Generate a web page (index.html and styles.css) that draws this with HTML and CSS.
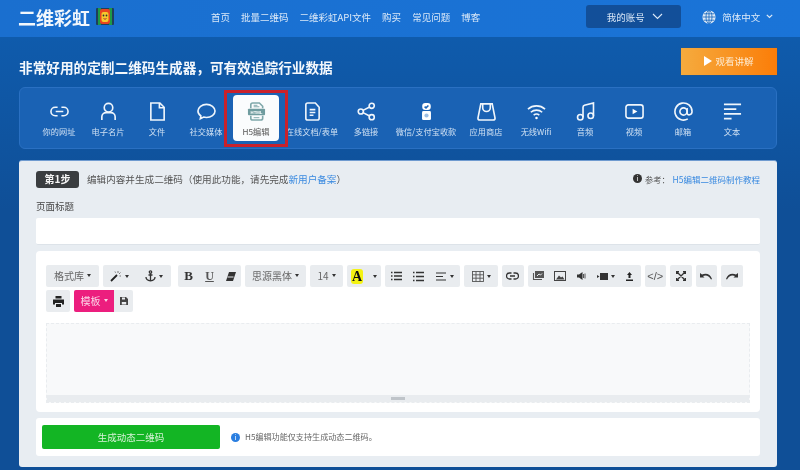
FILE: index.html
```html
<!DOCTYPE html>
<html lang="zh-CN">
<head>
    <meta charset="UTF-8">
    <meta name="viewport" content="width=device-width, initial-scale=1.0">
    <title>二维彩虹</title>
    <link rel="stylesheet" href="styles.css">
</head>
<body>
    <header class="topbar">
        <div class="logo">二维彩虹</div>
        <svg class="logo-mark" width="18" height="19" viewBox="0 0 18 19">
            <rect x="0" y="1" width="18" height="17" rx="1" fill="#1f3f5c"/>
            <rect x="2" y="1" width="3" height="17" fill="#1d9a46"/>
            <rect x="13" y="1" width="3" height="17" fill="#1d9a46"/>
            <rect x="4" y="2" width="10" height="15" rx="2" fill="#e8451f"/>
            <rect x="5.500" y="5" width="7" height="10" rx="2" fill="#f5c92c"/>
            <circle cx="7.500" cy="8.500" r=".9" fill="#333"/>
            <circle cx="10.500" cy="8.500" r=".9" fill="#333"/>
            <path d="M7.500 11.500q1.500 1.500 3 0" stroke="#a33" fill="none"/>
        </svg>
        <nav class="nav">
            <a>首页</a>
            <a>批量二维码</a>
            <a>二维彩虹API文件</a>
            <a>购买</a>
            <a>常见问题</a>
            <a>博客</a>
        </nav>
        <div class="account">我的账号
            <svg width="11" height="7" viewBox="0 0 11 7"><path d="M1 1l4.500 4.500L10 1" fill="none" stroke="#dbe9f8" stroke-width="1.100"/></svg>
        </div>
        <div class="lang">
            <svg width="14" height="14" viewBox="0 0 14 14" fill="none" stroke="#0f62bb" stroke-width=".8"><circle cx="7" cy="7" r="6.600" fill="#dfeaf6" stroke="none"/><ellipse cx="7" cy="7" rx="3" ry="6.400"/><path d="M7 .6v12.800M.6 7h12.800M1.600 3.800h10.800M1.600 10.200h10.800"/></svg>
            <span>简体中文</span>
            <svg width="7" height="5" viewBox="0 0 7 5"><path d="M.8.8l2.700 2.700L6.200.8" fill="none" stroke="#dfeaf6" stroke-width="1.200"/></svg>
        </div>
    </header>

    <main class="main">
        <div class="hero">
            <h1>非常好用的定制二维码生成器，可有效追踪行业数据</h1>
            <a class="watch-btn"><i class="play"></i>观看讲解</a>
        </div>

        <div class="tabs">
            <div class="tab">
                <svg viewBox="0 0 20 20"><path d="M8 5.500H5.500a4.500 4.500 0 0 0 0 9H8M12 5.500h2.500a4.500 4.500 0 0 1 0 9H12M6 10h8"/></svg>
                <span>你的网址</span>
            </div>
            <div class="tab">
                <svg viewBox="0 0 20 20"><circle cx="10" cy="6" r="4.500"/><path d="M3 19v-3.500a4.500 4.500 0 0 1 4.500-4.300h5a4.500 4.500 0 0 1 4.500 4.300V19"/></svg>
                <span>电子名片</span>
            </div>
            <div class="tab">
                <svg viewBox="0 0 20 20"><path d="M3 1h9.500L17 5.500V19H3zM12 1v5h5"/></svg>
                <span>文件</span>
            </div>
            <div class="tab">
                <svg viewBox="0 0 20 20"><path d="M10 2.500c-4.800 0-9 3-9 7 0 2.200 1.300 4 3.100 5.200l-.6 3 3.500-1.800c.9.300 1.900.4 3 .4 4.800 0 9-3 9-6.800s-4.200-7-9-7z"/></svg>
                <span>社交媒体</span>
            </div>
            <div class="tab tab-active">
                <svg viewBox="0 0 20 20" class="html-icon"><path d="M4 6.500V3q0-2 2-2h7l3.500 3.500v2"/><path d="M7 3.500h4M7 5h6" stroke-width="1"/><rect x="1" y="7" width="18" height="7" rx="1" fill="#6f9c9f" stroke="none"/><path d="M4 14.500V17q0 2 2 2h8.500q2 0 2-2v-2.500"/><path d="M7 16.500h6" stroke-width="1"/><text x="10" y="12.300" text-anchor="middle" class="html-text">HTML</text></svg>
                <span>H5编辑</span>
            </div>
            <div class="tab tab-doc">
                <svg viewBox="0 0 20 20"><path d="M3 3q0-2 2-2h8l4 4.500V17q0 2-2 2H5q-2 0-2-2zM7 8h6M7 11h6M7 14h4"/></svg>
                <span>在线文档/表单</span>
            </div>
            <div class="tab">
                <svg viewBox="0 0 20 20"><circle cx="15.500" cy="4" r="2.700"/><circle cx="4" cy="10" r="2.700"/><circle cx="15.500" cy="16" r="2.700"/><path d="M6.300 8.800l7-3.600M6.300 11.200l7 3.600"/></svg>
                <span>多链接</span>
            </div>
            <div class="tab tab-pay">
                <svg viewBox="0 0 20 20"><rect x="5.500" y="1" width="9" height="7.500" rx="3.200" fill="#fff" stroke="none"/><path d="M8 4.800l1.500 1.400 2.500-2.500" stroke="#1b65b9"/><rect x="5.300" y="9.500" width="9.400" height="9.500" rx="1.500" fill="#fff" stroke="none"/><circle cx="10" cy="14.200" r="2.200" fill="#9dbfe4" stroke="none"/></svg>
                <span>微信/支付宝收款</span>
            </div>
            <div class="tab">
                <svg viewBox="0 0 20 20"><path d="M4 2h12l3 15q0 2-2 2H3q-2 0-2-2z"/><path d="M6 2v4a4 4 0 0 0 8 0V2"/></svg>
                <span>应用商店</span>
            </div>
            <div class="tab tab-wifi">
                <svg viewBox="0 0 20 20"><path d="M1 7.500c5-4.500 13-4.500 18 0M4 10.800c3.500-3 8.500-3 12 0M7 13.800c1.700-1.300 4.300-1.300 6 0"/><circle cx="10" cy="16.800" r="1.300" fill="#fff" stroke="none"/></svg>
                <span>无线Wifi</span>
            </div>
            <div class="tab">
                <svg viewBox="0 0 20 20"><circle cx="4.500" cy="16" r="2.900"/><circle cx="15.500" cy="14.500" r="2.900"/><path d="M7.400 16V5.500q0-1.500 1.500-2L18.400 1v13.500"/></svg>
                <span>音频</span>
            </div>
            <div class="tab">
                <svg viewBox="0 0 20 20"><rect x="1" y="3" width="18" height="14" rx="2.500"/><path d="M8 7v6l5-3z" fill="#fff" stroke="none"/></svg>
                <span>视频</span>
            </div>
            <div class="tab">
                <svg viewBox="0 0 20 20"><circle cx="10" cy="10" r="3.800"/><path d="M13.800 6.200v5.500c0 2.800 5.200 2.400 5.200-1.700A9 9 0 1 0 14.500 17.800"/></svg>
                <span>邮箱</span>
            </div>
            <div class="tab">
                <svg viewBox="0 0 20 20"><path d="M1 2.500h18M1 7.500h13M1 12.500h18M1 17.500h8"/></svg>
                <span>文本</span>
            </div>
        </div>

        <section class="panel">
            <div class="step-row">
                <span class="step-badge">第1步</span>
                <span class="step-text">编辑内容并生成二维码（使用此功能，请先完成<a class="link">新用户备案</a>）</span>
                <span class="ref">
                    <i class="ref-dot">i</i>参考：<a class="link ref-link">H5编辑二维码制作教程</a>
                </span>
            </div>

            <label class="field-label">页面标题</label>
            <div class="title-input"></div>

            <div class="editor">
                <div class="toolbar">
                    <div class="group"><span class="btn btn-text">格式库<i class="caret"></i></span></div>
                    <div class="group">
                        <span class="btn w-wand"><svg width="12" height="12" viewBox="0 0 12 12"><path d="M1 11l6-6" stroke="#222" stroke-width="1.800"/><path d="M8 1v2M10.500 2.500L9 4M11 6H9.500M5 1.500l.5 1.200" stroke="#777"/></svg><i class="caret"></i></span>
                        <span class="btn w-anchor"><svg width="11" height="12" viewBox="0 0 11 12" fill="none" stroke="#333" stroke-width="1.300"><circle cx="5.500" cy="2" r="1.200"/><path d="M5.500 3.200V11M3.500 5h4M1 7c0 2.500 2 3.500 4.500 3.800C8 10.500 10 9.500 10 7"/></svg><i class="caret"></i></span>
                    </div>
                    <div class="group group-fmt">
                        <span class="btn w-icon font-b">B</span>
                        <span class="btn w-icon font-u">U</span>
                        <span class="btn w-icon"><svg width="10" height="9" viewBox="0 0 10 9"><path d="M3 0h7L7 9H0z" fill="#333"/><path d="M1.500 5h6" stroke="#e9ecef"/></svg></span>
                    </div>
                    <div class="group"><span class="btn btn-text w-font">思源黑体<i class="caret"></i></span></div>
                    <div class="group"><span class="btn btn-text w-size">14<i class="caret"></i></span></div>
                    <div class="group">
                        <span class="btn w-color"><span class="hl">A</span><i class="caret"></i></span>
                    </div>
                    <div class="group">
                        <span class="btn w-list"><svg width="11" height="10" viewBox="0 0 11 10" stroke="#333" stroke-width="1.400"><path d="M0 1.500h1.500M3 1.500h8M0 5h1.500M3 5h8M0 8.500h1.500M3 8.500h8"/></svg></span>
                        <span class="btn w-list"><svg width="11" height="11" viewBox="0 0 11 11" stroke="#333" stroke-width="1.400"><path d="M0 1.500h1.500M3 1.500h8M0 5.500h1.500M3 5.500h8M0 9.500h1.500M3 9.500h8"/></svg></span>
                        <span class="btn w-align"><svg width="10" height="9" viewBox="0 0 10 9" stroke="#333" stroke-width="1.100"><path d="M0 1h10M0 4.500h7M0 8h10"/></svg><i class="caret"></i></span>
                    </div>
                    <div class="group">
                        <span class="btn w-table"><svg width="12" height="11" viewBox="0 0 12 11" fill="none" stroke="#555" stroke-width=".9"><rect x=".5" y=".5" width="11" height="10"/><path d="M4 .5v10M8 .5v10M.5 3.800h11M.5 7.200h11"/></svg><i class="caret"></i></span>
                    </div>
                    <div class="group">
                        <span class="btn w-single"><svg width="13" height="8" viewBox="0 0 13 8" fill="none" stroke="#333" stroke-width="1.300"><path d="M5.500 1H3.500a3 3 0 0 0 0 6H5.500M7.500 1h2a3 3 0 0 1 0 6h-2M4 4h5"/></svg></span>
                    </div>
                    <div class="group">
                        <span class="btn w-media"><svg width="12" height="10" viewBox="0 0 12 10" fill="#555"><path d="M3 0h9v7H3z"/><path d="M1.500 2v6.500H10" fill="none" stroke="#555" stroke-width="1.100"/><path d="M5 5l2-2 1.500 1L10 2.500" stroke="#e9ecef" fill="none"/></svg></span>
                        <span class="btn w-media"><svg width="12" height="10" viewBox="0 0 12 10"><rect x=".5" y=".5" width="11" height="9" fill="none" stroke="#444"/><path d="M2 8.500l3-4 2 2 1.500-1 2 3z" fill="#444"/></svg></span>
                        <span class="btn w-media"><svg width="9" height="8" viewBox="0 0 9 8" fill="#333"><path d="M0 2.500h2L5.500 0v8L2 5.500H0z"/><path d="M6.500 2v4M8 1.500v5" stroke="#333" stroke-width=".8"/></svg></span>
                        <span class="btn w-video"><svg width="11" height="7" viewBox="0 0 11 7" fill="#333"><path d="M3 0h8v7H3zM0 2l2.500 1.500L0 5z"/></svg><i class="caret"></i></span>
                        <span class="btn w-media"><svg width="7" height="9" viewBox="0 0 7 9" fill="#222"><path d="M3.500 0l2.500 3H4.500v3h-2V3H1zM0 7.500h7V9H0z"/></svg></span>
                    </div>
                    <div class="group"><span class="btn w-single code-btn">&lt;/&gt;</span></div>
                    <div class="group">
                        <span class="btn w-single"><svg width="10" height="10" viewBox="0 0 10 10" fill="none" stroke="#333" stroke-width="1.300"><path d="M1 1l8 8M9 1l-8 8M.5 3V.5H3M7 .5h2.500V3M9.500 7v2.500H7M3 9.500H.5V7"/></svg></span>
                    </div>
                    <div class="group">
                        <span class="btn w-single"><svg width="12" height="7" viewBox="0 0 12 7" fill="#333"><path d="M0 0v4.500h4.500L3 3c2.500-1.200 6-.8 8 3.500l1-.5C10.500 1 6-.5 2 1.500z"/></svg></span>
                    </div>
                    <div class="group">
                        <span class="btn w-single"><svg width="12" height="7" viewBox="0 0 12 7" fill="#333"><path d="M12 0v4.500H7.500L9 3C6.500 1.800 3 2.200 1 6.500L0 6C1.500 1 6-.5 10 1.500z"/></svg></span>
                    </div>
                    <div class="group">
                        <span class="btn w-print"><svg width="11" height="11" viewBox="0 0 11 11" fill="#222"><path d="M2.500 0h6v2.500h-6zM0 3.500h11v5H9V7H2v1.500H0zM3 8h5v3H3z"/></svg></span>
                    </div>
                    <div class="group group-join">
                        <span class="btn btn-pink">模板<i class="caret"></i></span>
                        <span class="btn w-save"><svg width="8" height="8" viewBox="0 0 8 8"><path d="M0 0h6l2 2v6H0z" fill="#444"/><path d="M2 .5h3v2H2zM1.800 5h4.400v2.500H1.800z" fill="#e9ecef"/></svg></span>
                    </div>
                </div>
                <div class="edit-area">
                    <div class="resize-bar"><i></i></div>
                </div>
            </div>

            <div class="submit-card">
                <a class="submit-btn">生成动态二维码</a>
                <i class="note-dot">i</i>
                <span class="note">H5编辑功能仅支持生成动态二维码。</span>
            </div>
        </section>
    </main>
</body>
</html>
```

FILE: styles.css
```css
* {
    box-sizing: border-box;
}
html, body {
    margin: 0;
    padding: 0;
    height: 470px;
    overflow: hidden;
}
body {
    font-family: "Noto Sans CJK SC", "Liberation Sans", sans-serif;
    background-color: #0f4f97;
    color: #333;
    filter: blur(.3px); /* the reference is a soft, scaled-up capture */
}

/* top bar */
.topbar {
    height: 37px;
    display: flex;
    align-items: center;
    padding: 0 0 4px 18px;
    background: linear-gradient(90deg, #1a6fcf, #1a74d8);
    color: #dbe9f8;
}
.logo {
    font-size: 18px;
    font-weight: 700;
    color: #f2f7fc;
}
.logo-mark {
    margin-left: 6px;
}
.nav {
    display: flex;
    gap: 11px;
    margin-left: 97px;
    font-size: 9.500px;
}
.account {
    width: 95px;
    height: 23px;
    margin-left: 106px;
    padding-left: 2px;
    background-color: #124f99;
    border-radius: 3px;
    display: flex;
    align-items: center;
    justify-content: center;
    gap: 7px;
    font-size: 9.500px;
}
.lang {
    display: flex;
    align-items: center;
    margin-left: 21px;
    gap: 6px;
    font-size: 9.500px;
}

/* main area */
.main {
    height: 433px;
    padding: 11px 23px 0 19px;
    background: linear-gradient(180deg, #0f5bac, #0f4f97 40%);
}
.hero {
    height: 27px;
    display: flex;
    justify-content: space-between;
    align-items: center;
}
.hero h1 {
    margin: 10px 0 0;
    font-size: 13.650px;
    font-weight: 700;
    color: #f4f8fc;
}
.watch-btn {
    width: 96px;
    height: 27px;
    padding-bottom: 2px;
    display: flex;
    align-items: center;
    justify-content: center;
    gap: 3px;
    background: linear-gradient(90deg, #f5ab3e, #fb7d08);
    color: #fdebd2;
    font-size: 9.500px;
    box-shadow: 0 0 1px #555;
}
.play {
    width: 0;
    height: 0;
    border-left: 8px solid #fff;
    border-top: 5px solid transparent;
    border-bottom: 5px solid transparent;
}

/* type tabs */
.tabs {
    height: 62px;
    margin-top: 12px;
    padding: 7px 0 0 16px;
    display: flex;
    gap: 3px;
    background-color: #1a62b4;
    border: 1px solid #2a70c2;
    border-radius: 6px;
}
.tab {
    width: 46px;
    height: 46px;
    flex: none;
    display: flex;
    flex-direction: column;
    align-items: center;
    padding-top: 7px;
    color: #cfe0f3;
    font-size: 8.200px;
    white-space: nowrap;
}
.tab svg {
    width: 19px;
    height: 19px;
    fill: none;
    stroke: #f0f6fc;
    stroke-width: 1.700;
}
.tab span {
    margin-top: 4px;
    line-height: 12px;
}
.tab-active {
    position: relative;
    background-color: #fafcfd;
    border-radius: 4px;
    color: #555;
    margin-left: 1px;
}
.tab-active::after {
    content: "";
    position: absolute;
    top: -5px;
    bottom: -6px;
    left: -9px;
    right: -9px;
    border: 3px solid #c9212b;
}
.tab .html-icon {
    stroke: #7fa8aa;
}
.html-text {
    font-family: "Liberation Sans", sans-serif;
    font-size: 4.500px;
    font-weight: 700;
    fill: #fff;
    stroke: none;
}
.tab-doc {
    width: 56px;
    margin-left: 2px;
}
.tab-pay {
    width: 68px;
}
.tab-wifi {
    margin-left: 1px;
}

/* panel */
.panel {
    height: 307px;
    margin-top: 11px;
    padding: 10px 17px 0;
    background-color: #e8edf2;
    border-radius: 3px;
    border-top: 1px solid #6f9bd0;
}
.step-row {
    display: flex;
    align-items: center;
    height: 17px;
    font-size: 9.600px;
}
.step-badge {
    width: 43px;
    height: 17px;
    line-height: 16px;
    text-align: center;
    background-color: #3a3d40;
    border-radius: 3px;
    color: #f4f4f4;
    font-weight: 700;
    font-size: 10px;
}
.step-text {
    margin: 0 0 2px 8px;
    color: #555;
}
.link {
    color: #3a8ae0;
}
.ref {
    margin: 0 0 2px auto;
    display: flex;
    align-items: center;
    font-size: 8.200px;
    color: #555;
}
.ref-dot {
    width: 9px;
    height: 9px;
    margin-right: 3px;
    border-radius: 50%;
    background-color: #333;
    color: #fff;
    font-size: 7px;
    line-height: 9px;
    text-align: center;
    font-style: normal;
}
.ref-link {
    margin-left: 3px;
    font-size: 8.500px;
}
.field-label {
    display: block;
    margin-top: 11px;
    height: 14px;
    line-height: 14px;
    font-size: 9.500px;
    color: #444;
}
.title-input {
    height: 27px;
    margin-top: 5px;
    background-color: #fff;
    border-radius: 2px;
    border-bottom: 1px solid #dde3e9;
}

/* editor */
.editor {
    height: 161px;
    margin-top: 6px;
    padding: 14px 10px 0;
    background-color: #fff;
    border-radius: 4px;
}
.toolbar {
    display: flex;
    flex-wrap: wrap;
    align-content: flex-start;
    gap: 3px 4px;
    height: 58px;
}
.group {
    height: 22px;
    display: flex;
    background-color: #e9ecef;
    border-radius: 2px;
}
.group-fmt {
    margin-left: 3px;
}
.group-join {
    gap: 0;
}
.btn {
    height: 22px;
    display: flex;
    align-items: center;
    justify-content: center;
    gap: 3px;
    font-size: 10px;
    color: #666;
}
.btn-text {
    width: 53px;
    padding-bottom: 2px;
}
.caret {
    width: 0;
    height: 0;
    border-top: 3px solid #333;
    border-left: 2.500px solid transparent;
    border-right: 2.500px solid transparent;
}
.w-wand { width: 33px; }
.w-anchor { width: 35px; }
.w-icon { width: 21px; }
.w-font { width: 61px; }
.w-size { width: 33px; }
.w-color { width: 34px; gap: 10px; }
.w-list { width: 22px; }
.w-align { width: 31px; gap: 4px; }
.w-table { width: 34px; }
.w-single { width: 21.500px; }
.w-media { width: 21.500px; }
.w-video { width: 27px; }
.w-print { width: 24px; }
.w-save { width: 19px; }
.font-b {
    font-family: "Liberation Serif", serif;
    font-weight: 700;
    font-size: 13px;
    color: #333;
}
.font-u {
    font-family: "Liberation Serif", serif;
    font-weight: 700;
    font-size: 12px;
    color: #555;
    text-decoration: underline;
}
.hl {
    font-family: "Liberation Serif", serif;
    font-weight: 700;
    font-size: 14px;
    line-height: 15px;
    color: #111;
    background-color: #f4f312;
    border-radius: 3px;
    padding: 0 1px;
}
.code-btn {
    font-family: "Liberation Sans", sans-serif;
    font-size: 11px;
    color: #555;
}
.btn-pink {
    width: 40px;
    padding-bottom: 2px;
    background-color: #ec1e7e;
    border-radius: 2px 0 0 2px;
    color: #fbd3e6;
}
.btn-pink .caret {
    border-top-color: #fbd3e6;
}
.edit-area {
    position: relative;
    height: 80px;
    background-color: #f8f9fa;
    border: 1px dashed #e9ecef;
}
.resize-bar {
    position: absolute;
    left: 0;
    right: 0;
    bottom: 0;
    height: 7px;
    background-color: #e9ecef;
    display: flex;
    justify-content: center;
    align-items: center;
}
.resize-bar i {
    width: 14px;
    height: 3px;
    background-color: #bfc4c9;
}

/* bottom card */
.submit-card {
    height: 38px;
    margin-top: 6px;
    padding: 0 6px;
    display: flex;
    align-items: center;
    background-color: #fff;
    border-radius: 3px;
}
.submit-btn {
    width: 178px;
    height: 24px;
    line-height: 24px;
    text-align: center;
    background-color: #13b524;
    border-radius: 2px;
    color: #d8f3d8;
    font-size: 9.500px;
}
.note-dot {
    width: 9px;
    height: 9px;
    margin-left: 11px;
    border-radius: 50%;
    background-color: #2a7ee0;
    color: #fff;
    font-size: 7px;
    line-height: 9px;
    text-align: center;
    font-style: normal;
}
.note {
    margin: 0 0 2px 5px;
    font-size: 8.100px;
    color: #666;
}
```
